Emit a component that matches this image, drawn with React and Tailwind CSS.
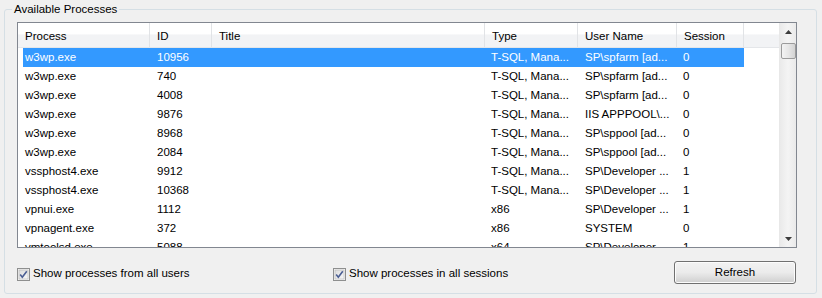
const rows = [
    ["w3wp.exe", "10956", "", "T-SQL, Mana...", "SP\\spfarm [ad...", "0"],
    ["w3wp.exe", "740", "", "T-SQL, Mana...", "SP\\spfarm [ad...", "0"],
    ["w3wp.exe", "4008", "", "T-SQL, Mana...", "SP\\spfarm [ad...", "0"],
    ["w3wp.exe", "9876", "", "T-SQL, Mana...", "IIS APPPOOL\\...", "0"],
    ["w3wp.exe", "8968", "", "T-SQL, Mana...", "SP\\sppool [ad...", "0"],
    ["w3wp.exe", "2084", "", "T-SQL, Mana...", "SP\\sppool [ad...", "0"],
    ["vssphost4.exe", "9912", "", "T-SQL, Mana...", "SP\\Developer ...", "1"],
    ["vssphost4.exe", "10368", "", "T-SQL, Mana...", "SP\\Developer ...", "1"],
    ["vpnui.exe", "1112", "", "x86", "SP\\Developer ...", "1"],
    ["vpnagent.exe", "372", "", "x86", "SYSTEM", "0"],
    ["vmtoolsd.exe", "5088", "", "x64", "SP\\Developer ...", "1"],
];

const headers = [
    { label: "Process", w: "w-[132px]" },
    { label: "ID", w: "w-[62px]" },
    { label: "Title", w: "w-[273px]" },
    { label: "Type", w: "w-[93px]" },
    { label: "User Name", w: "w-[99px]" },
    { label: "Session", w: "w-[67px]" },
];

// widths for the data cells (first one is shifted by the item indent)
const cellW = ["w-[127px] pl-[2px]", "w-[62px] pl-[7px]", "w-[273px] pl-[7px]", "w-[93px] pl-[6px]", "w-[99px] pl-[7px]", "w-[67px] pl-[6px]"];

const CheckBox = () => (
    <svg width="13" height="13" viewBox="0 0 13 13" className="shrink-0">
        <defs>
            <linearGradient id="cbg" x1="0" y1="0" x2="1" y2="1">
                <stop offset="0" stopColor="#dcdcdc" />
                <stop offset="1" stopColor="#f8f8f8" />
            </linearGradient>
        </defs>
        <rect x="0.5" y="0.5" width="12" height="12" fill="#f4f4f4" stroke="#8e8f8f" />
        <rect x="2" y="2" width="9" height="9" fill="url(#cbg)" stroke="#b5b5b5" strokeWidth="0.6" />
        <path d="M3.2 6.6 L5.3 9.3 L9.8 3.2" fill="none" stroke="#4b5e93" strokeWidth="1.6" />
    </svg>
);

export default function App() {
    return (
        <div className="w-[822px] h-[298px] bg-[#f0f0f0] pt-[9px] pl-[4px] text-[11.5px] text-black" style={{ fontFamily: '"Liberation Sans", Arial, sans-serif' }}>
            <div className="relative w-[813px] h-[285px] border border-[#d5dfe5] rounded-[3px] pt-[12px] pl-[12px]">
                <span className="absolute -top-[9px] left-[7px] px-[2px] bg-[#f0f0f0] leading-[16px]">Available Processes</span>

                {/* list view */}
                <div className="w-[780px] h-[226px] border border-[#828790] bg-white flex overflow-hidden">
                    <div className="w-[761px] flex flex-col">
                        <div className="flex h-[25px] shrink-0 bg-gradient-to-b from-white from-45% to-[#f2f3f5] to-50% border-b border-[#e4e6e9]">
                            {headers.map(h => (
                                <div key={h.label} className={`${h.w} shrink-0 pl-[7px] pt-[3px] flex items-center border-r border-[#e1e3e6]`}>{h.label}</div>
                            ))}
                            <div className="flex-1" />
                        </div>
                        <div className="flex flex-col overflow-hidden">
                            {rows.map((r, i) => (
                                <div key={i} className={`ml-[5px] flex h-[19px] shrink-0 items-center pt-[1px] w-[721px] ${i === 0 ? "bg-[#3399ff] text-white" : ""}`}>
                                    {r.map((c, j) => (
                                        <div key={j} className={`${cellW[j]} shrink-0 whitespace-nowrap overflow-hidden`}>{c}</div>
                                    ))}
                                </div>
                            ))}
                        </div>
                    </div>

                    {/* scrollbar */}
                    <div className="w-[17px] h-full bg-gradient-to-r from-[#eaeaea] via-[#f4f4f4] to-[#eaeaea] border-l border-[#e8e8e8] flex flex-col items-center">
                        <div className="h-[17px] w-full flex items-center justify-center">
                            <svg width="7" height="4" viewBox="0 0 7 4"><path d="M0 4 L3.5 0 L7 4 Z" fill="#3c3c3c" /></svg>
                        </div>
                        <div className="w-[15px] h-[16px] mt-[3px] rounded-[2px] border border-[#9b9b9b] bg-gradient-to-r from-[#f3f3f3] via-[#e6e6e6] to-[#d3d3d3]" />
                        <div className="flex-1" />
                        <div className="h-[17px] w-full flex items-center justify-center">
                            <svg width="7" height="4" viewBox="0 0 7 4"><path d="M0 0 L7 0 L3.5 4 Z" fill="#3c3c3c" /></svg>
                        </div>
                    </div>
                </div>

                {/* bottom options */}
                <div className="flex items-center mt-[13px] w-[779px]">
                    <label className="w-[316px] flex items-center gap-[3px] pt-[3px]">
                        <CheckBox />
                        <span>Show processes from all users</span>
                    </label>
                    <label className="flex-1 flex items-center gap-[3px] pt-[3px]">
                        <CheckBox />
                        <span>Show processes in all sessions</span>
                    </label>
                    <button className="w-[122px] h-[23px] rounded-[3px] border border-[#707070] bg-gradient-to-b from-[#f2f2f2] from-0% via-[#ebebeb] via-50% to-[#cfcfcf] shadow-[inset_0_0_0_1px_#fcfcfc]">Refresh</button>
                </div>
            </div>
        </div>
    );
}
